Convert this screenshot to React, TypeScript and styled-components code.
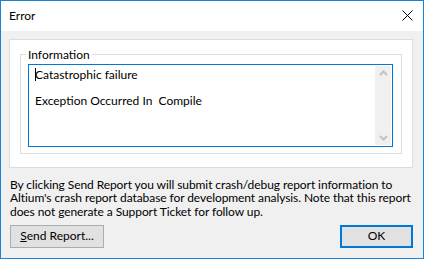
import React from "react";
import styled, { createGlobalStyle } from "styled-components";

const GlobalStyle = createGlobalStyle`
  html, body {
    margin: 0;
    padding: 0;
    background: #ffffff;
  }
  * {
    box-sizing: border-box;
  }
`;

const Window = styled.div`
  width: 424px;
  height: 259px;
  overflow: hidden;
  border: 1px solid #1883d7;
  display: flex;
  flex-direction: column;
  font-family: Lato, "Noto Sans", sans-serif;
  font-size: 12px;
  color: #000;
  background: #f0f0f0;
`;

const TitleBar = styled.div`
  height: 30px;
  flex: none;
  background: #fff;
  display: flex;
  align-items: center;
  justify-content: space-between;
  padding: 0 10px 1px 8px;
`;

const Title = styled.span`
  font-size: 12px;
`;

const CloseButton = styled.div`
  width: 12px;
  height: 12px;
  display: flex;
  align-items: center;
  justify-content: center;
`;

const Body = styled.div`
  flex: 1;
  display: flex;
  flex-direction: column;
  padding: 8px 10px 0 8px;
`;

const Panel = styled.div`
  background: #fff;
  border: 1px solid #dcdcdc;
  height: 129px;
  flex: none;
  padding: 8px 10px 0 10px;
`;

const GroupBox = styled.fieldset`
  margin: 0;
  height: 106px;
  border: 1px solid #dcdcdc;
  padding: 3px 8px 0 7px;
`;

const Legend = styled.legend`
  padding: 0 2px;
  margin-left: -2px;
  line-height: 13px;
`;

const TextBox = styled.div`
  height: 83px;
  border: 1px solid #0078d7;
  display: flex;
  background: #fff;
`;

const TextArea = styled.div`
  flex: 1;
  padding: 3px 0 0 6px;
  line-height: 13px;
  white-space: pre;
`;

const Caret = styled.span`
  display: inline-block;
  width: 1px;
  height: 13px;
  background: #000;
  vertical-align: top;
  margin-right: -1px;
`;

const ScrollBar = styled.div`
  width: 16px;
  margin: 1px 1px 1px 0;
  background: #f0f0f0;
  display: flex;
  flex-direction: column;
  justify-content: space-between;
  align-items: center;
  padding: 4px 0;
`;

const Notice = styled.p`
  margin: 10px 0 0 1px;
  line-height: 13.3px;
  letter-spacing: -0.08px;
  white-space: nowrap;
  color: #000;
`;

const ButtonRow = styled.div`
  display: flex;
  justify-content: space-between;
  margin-top: 7px;
  padding-left: 1px;
`;

const Button = styled.div<{ $primary?: boolean; $width: number }>`
  width: ${(p) => p.$width}px;
  height: 23px;
  background: #e1e1e1;
  border: ${(p) => (p.$primary ? "2px solid #0078d7" : "1px solid #adadad")};
  display: flex;
  align-items: center;
  justify-content: center;
  padding-bottom: 1px;
`;

const Mnemonic = styled.span`
  text-decoration: underline;
`;

const Chevron = ({ up }: { up?: boolean }) => (
  <svg width="9" height="6" viewBox="0 0 9 6">
    <path
      d={up ? "M1 5 L4.5 1.5 L8 5" : "M1 1 L4.5 4.5 L8 1"}
      fill="none"
      stroke="#c2c2c2"
      strokeWidth="2"
    />
  </svg>
);

export default function App() {
  return (
    <>
      <GlobalStyle />
      <Window>
        <TitleBar>
          <Title>Error</Title>
          <CloseButton>
            <svg width="11" height="11" viewBox="0 0 11 11">
              <path d="M0.5 0.5 L10.5 10.5 M10.5 0.5 L0.5 10.5" stroke="#000" strokeWidth="1" />
            </svg>
          </CloseButton>
        </TitleBar>
        <Body>
          <Panel>
            <GroupBox>
              <Legend>Information</Legend>
              <TextBox>
                <TextArea>
                  <Caret />
                  {"Catastrophic failure\n\nException Occurred In  Compile"}
                </TextArea>
                <ScrollBar>
                  <Chevron up />
                  <Chevron />
                </ScrollBar>
              </TextBox>
            </GroupBox>
          </Panel>
          <Notice>
            By clicking Send Report you will submit crash/debug report information to
            <br />
            Altium's crash report database for development analysis. Note that this report
            <br />
            does not generate a Support Ticket for follow up.
          </Notice>
          <ButtonRow>
            <Button $width={94}>
              <span>
                <Mnemonic>S</Mnemonic>end Report...
              </span>
            </Button>
            <Button $primary $width={73}>
              OK
            </Button>
          </ButtonRow>
        </Body>
      </Window>
    </>
  );
}
